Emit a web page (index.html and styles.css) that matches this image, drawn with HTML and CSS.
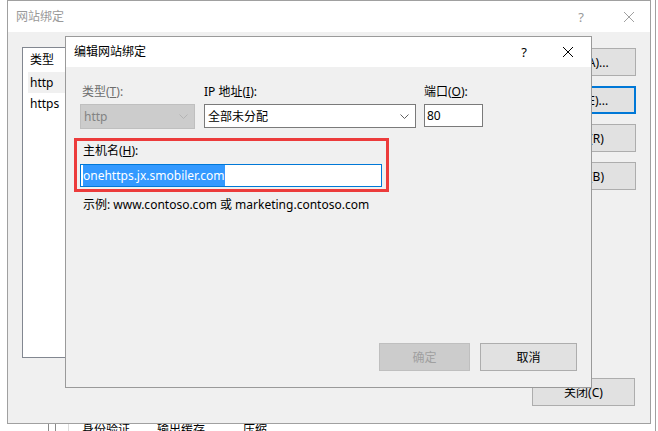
FILE: index.html
```html
<!DOCTYPE html>
<html lang="zh-CN">
<head>
    <meta charset="UTF-8">
    <title>编辑网站绑定</title>
    <link rel="stylesheet" href="styles.css">
</head>
<body>
<div class="desktop">
    <div class="under">
        <span class="rule first"></span><span class="rule"></span><span class="rule light"></span>
        <span class="under-item auth">身份验证</span>
        <span class="under-item cache">输出缓存</span>
        <span class="under-item zip">压缩</span>
    </div>
    <span class="edge-line"></span>

    <!-- outer window: 网站绑定 -->
    <div class="win win-outer">
        <div class="titlebar inactive">
            <span class="title">网站绑定</span>
            <span class="tb-help">?</span>
            <svg class="tb-close" width="12" height="12" viewBox="0 0 12 12"><path d="M1 1L11 11M11 1L1 11" stroke="#a0a0a0" stroke-width="1"/></svg>
        </div>
        <div class="outer-body">
            <div class="outer-main">
                <div class="listview">
                    <div class="lv-head">类型</div>
                    <div class="lv-row selected">http</div>
                    <div class="lv-row">https</div>
                </div>
                <div class="side-buttons">
                    <button class="btn">添加(A)...</button>
                    <button class="btn focused">编辑(E)...</button>
                    <button class="btn">删除(R)</button>
                    <button class="btn">浏览(B)</button>
                </div>
            </div>
            <div class="outer-foot">
                <button class="btn close-btn">关闭(C)</button>
            </div>
        </div>
    </div>

    <!-- inner window: 编辑网站绑定 -->
    <div class="win win-inner">
        <div class="titlebar">
            <span class="title">编辑网站绑定</span>
            <span class="tb-help">?</span>
            <svg class="tb-close" width="12" height="12" viewBox="0 0 12 12"><path d="M1 1L11 11M11 1L1 11" stroke="#000" stroke-width="1"/></svg>
        </div>
        <div class="edit-body">
            <div class="field-grid">
                <label class="lbl disabled">类型(<u>T</u>):</label>
                <label class="lbl">IP 地址(<u>I</u>):</label>
                <label class="lbl">端口(<u>O</u>):</label>
                <div class="combo is-disabled">
                    <span>http</span>
                    <svg width="9" height="5" viewBox="0 0 9 5"><path d="M0.5 0.5L4.5 4.5L8.5 0.5" fill="none" stroke="#b4b4b4"/></svg>
                </div>
                <div class="combo">
                    <span>全部未分配</span>
                    <svg width="9" height="5" viewBox="0 0 9 5"><path d="M0.5 0.5L4.5 4.5L8.5 0.5" fill="none" stroke="#606060"/></svg>
                </div>
                <div class="textbox">80</div>
            </div>

            <div class="host-box">
                <label class="lbl host-lbl">主机名(<u>H</u>):</label>
                <div class="textbox host-input"><span class="sel">onehttps.jx.smobiler.com</span></div>
            </div>

            <p class="example">示例: www.contoso.com 或 marketing.contoso.com</p>

            <div class="edit-foot">
                <button class="btn ok-btn" disabled>确定</button>
                <button class="btn cancel-btn">取消</button>
            </div>
        </div>
    </div>
</div>
</body>
</html>
```

FILE: styles.css
```css
body {
    margin: 0;
    padding: 0;
    font-family: "Segoe UI", "Noto Sans", "Noto Sans CJK SC", sans-serif;
    font-size: 12px;
    color: #000;
}
.desktop {
    position: relative;
    width: 658px;
    height: 431px;
    overflow: hidden;
    background: #fff;
}
.under {
    position: absolute;
    left: 0;
    top: 423px;
    width: 658px;
    height: 20px;
    display: flex;
    align-items: flex-start;
}
.under .rule {
    width: 1px;
    height: 20px;
    background: #8a8a8a;
    margin-left: 6px;
}
.under .rule.first { margin-left: 48px; }
.under .rule.light { background: #dcdcdc; margin-left: 12px; }
.under-item {
    font-size: 12px;
    line-height: 14px;
    margin-top: 0;
    white-space: nowrap;
}
.under-item.auth { margin-left: 13px; }
.under-item.cache { margin-left: 27px; }
.under-item.zip { margin-left: 38px; }
.edge-line {
    position: absolute;
    left: 655px;
    top: 0;
    width: 1px;
    height: 431px;
    background: #a0a0a0;
}

.win {
    position: absolute;
    background: #f0f0f0;
    border: 1px solid #a0a0a0;
    display: flex;
    flex-direction: column;
}
.win-outer {
    left: 7px;
    top: 0;
    width: 642px;
    height: 422px;
}
.win-inner {
    left: 65px;
    top: 36px;
    width: 525px;
    height: 350px;
    border-color: #9a9a9a;
}
.titlebar {
    height: 30px;
    background: #fff;
    display: flex;
    align-items: center;
    padding-left: 8px;
    flex-shrink: 0;
}
.win-outer .titlebar { height: 31px; }
.titlebar .title {
    flex: 1;
    line-height: 16px;
}
.titlebar.inactive { color: #999; }
.tb-help {
    width: 14px;
    text-align: center;
    font-size: 13px;
}
.tb-close {
    margin-left: 31px;
    margin-right: 17px;
}
.win-outer .tb-close { margin-left: 35px; margin-right: 15px; }

.outer-body {
    flex: 1;
    padding: 15px 14px 0 14px;
    display: flex;
    flex-direction: column;
}
.outer-main {
    display: flex;
    gap: 12px;
    height: 311px;
}
.listview {
    flex: 1;
    background: #fff;
    border: 1px solid #828790;
    padding-left: 5px;
}
.lv-head {
    height: 24px;
    line-height: 24px;
    padding-left: 2px;
}
.lv-row {
    height: 21px;
    line-height: 21px;
    padding-left: 2px;
}
.lv-row.selected { background: #f0f0f0; }
.side-buttons {
    width: 103px;
    display: flex;
    flex-direction: column;
    gap: 10px;
    padding-top: 1px;
}
.btn {
    font-family: inherit;
    font-size: 12px;
    height: 28px;
    background: #e1e1e1;
    border: 1px solid #adadad;
    color: #000;
    padding: 0;
}
.btn.focused {
    border: 2px solid #0078d7;
}
.outer-foot {
    display: flex;
    justify-content: flex-end;
    margin-top: 20px;
    padding-right: 1px;
}
.close-btn { width: 103px; }

.edit-body {
    flex: 1;
    display: flex;
    flex-direction: column;
    padding: 17px 0 0 14px;
}
.field-grid {
    display: grid;
    grid-template-columns: 115px 212px 58px;
    column-gap: 9px;
    row-gap: 4px;
    width: 395px;
}
.field-grid > :nth-child(3n) { margin-left: -1px; }
.lbl {
    line-height: 16px;
    display: block;
}
.lbl.disabled {
    color: #6d6d6d;
    padding-left: 2px;
}
.combo {
    height: 22px;
    border: 1px solid #7a7a7a;
    background: #fff;
    display: flex;
    align-items: center;
    justify-content: space-between;
    padding: 0 6px 0 3px;
}
.combo.is-disabled {
    background: #cccccc;
    border-color: #bfbfbf;
    color: #838383;
    height: 23px;
}
.textbox {
    height: 21px;
    line-height: 21px;
    border: 1px solid #7a7a7a;
    background: #fff;
    padding-left: 2px;
}
.host-box {
    width: 302px;
    margin: 9px 0 0 -6px;
    border: 3px solid #ec3b3b;
    padding: 2px 4px 2px 3px;
}
.host-lbl { padding-left: 3px; }
.host-input {
    margin-top: 5px;
    border-color: #0078d7;
}
.sel {
    background: #3399ff;
    color: #fff;
    padding: 2px 0;
}
.example {
    margin: 5px 0 0 3px;
    line-height: 16px;
}
.edit-foot {
    margin-top: auto;
    display: flex;
    justify-content: flex-end;
    gap: 10px;
    padding: 0 14px 16px 0;
}
.ok-btn {
    width: 91px;
    background: #cccccc;
    border-color: #bfbfbf;
    color: #a0a0a0;
}
.cancel-btn { width: 97px; }
```
